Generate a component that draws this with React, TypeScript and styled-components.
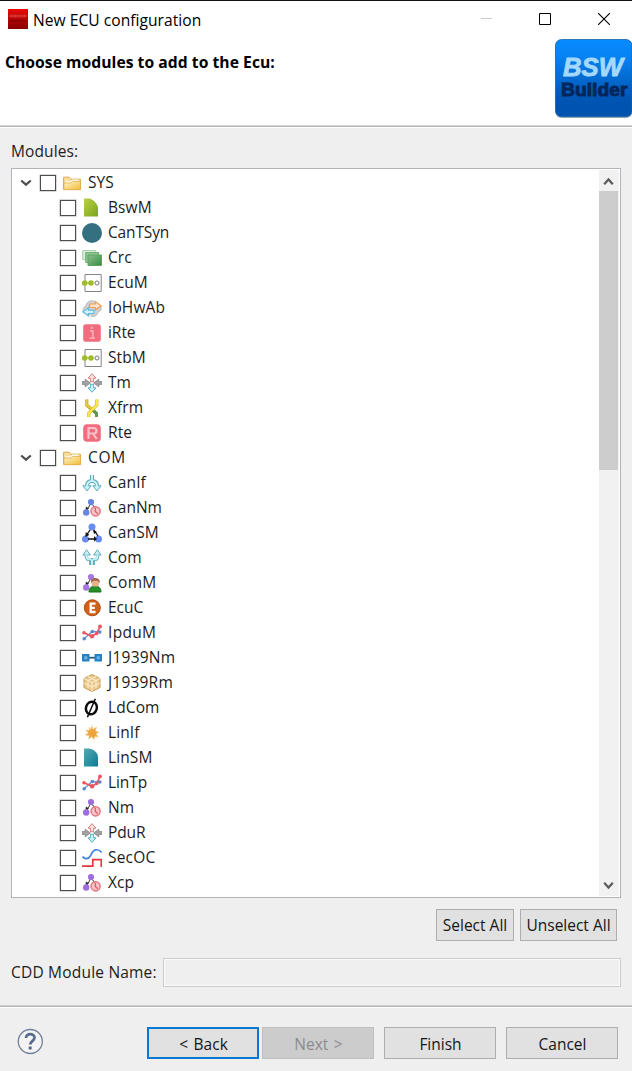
import React from "react";
import styled, { createGlobalStyle } from "styled-components";

const Global = createGlobalStyle`
  * { box-sizing: border-box; }
  body { margin: 0; background: #efefef; }
`;

const Dialog = styled.div`
  width: 632px;
  height: 1071px;
  display: flex;
  flex-direction: column;
  overflow: hidden;
  background: #efefef;
  color: #1c1c1c;
  font-family: "Open Sans", "Noto Sans", sans-serif;
  font-size: 15.5px;
  line-height: 20px;
  white-space: nowrap;
`;

const TitleBar = styled.header`
  height: 39px;
  flex: none;
  display: flex;
  align-items: center;
  padding: 0 0 2px 8px;
  background: #fff;
  border-top: 1px solid #111;
`;

const Title = styled.span`
  flex: 1;
  margin-left: 5px;
  padding-top: 2px;
  color: #000;
  font-size: 15.6px;
  letter-spacing: 0.03px;
`;

const WindowControls = styled.div`
  display: flex;
  gap: 47px;
  padding-right: 22px;
`;

const Banner = styled.section`
  height: 89px;
  flex: none;
  display: flex;
  justify-content: space-between;
  background: #fff;
  border-bottom: 1px solid #fff;
  box-shadow: inset 0 -1.5px #b4b4b4;
`;

const Heading = styled.h1`
  margin: 13px 0 0 5px;
  color: #000;
  font-size: 15.7px;
  line-height: 20px;
  font-weight: 700;
  letter-spacing: 0.03px;
`;

const Body = styled.main`
  flex: none;
  height: 880px;
  padding: 13px 11px 0;
  display: flex;
  flex-direction: column;
  border-bottom: 1px solid #fff;
  box-shadow: inset 0 -1.5px #b4b4b4;
`;

const Caption = styled.label<{ $spacing?: number }>`
  letter-spacing: ${(p) => p.$spacing ?? 0}px;
`;

const TreeFrame = styled.div`
  height: 730px;
  margin-top: 7px;
  flex: none;
  display: flex;
  justify-content: space-between;
  padding: 1px;
  background: #fff;
  border: 1px solid #b3b3b9;
`;

const Tree = styled.ul`
  margin: 0;
  padding: 0;
  list-style: none;
`;

const Row = styled.li<{ $child?: boolean }>`
  height: 25px;
  display: flex;
  align-items: flex-start;
  padding-left: ${(p) => (p.$child ? 47 : 7)}px;
`;

const Expander = styled.svg`
  width: 12px;
  height: 8px;
  margin: 9px 8px 0 0;
`;

const Check = styled.span`
  width: 16px;
  height: 16px;
  margin: 5px 1px 0 0;
  background: #fff;
  border: 1px solid #4d4d4d;
  box-shadow: 0 0 0 0.5px #b5b5b5;
`;

const Icon = styled.svg<{ $drop: number }>`
  width: 20px;
  height: 20px;
  margin: ${(p) => p.$drop}px 6px 0 5px;
`;

const RowText = styled.span<{ $spacing?: number }>`
  margin-top: 2px;
  letter-spacing: ${(p) => p.$spacing ?? 0.1}px;
`;

const ScrollTrack = styled.div`
  width: 20px;
  display: flex;
  flex-direction: column;
  background: #f1f1f1;
`;

const ScrollArrow = styled.svg`
  width: 20px;
  height: 21px;
`;

const Thumb = styled.div`
  width: 19px;
  height: 279px;
  margin-bottom: auto;
  background: #cdcdcd;
`;

const Selection = styled.div`
  display: flex;
  justify-content: flex-end;
  gap: 6px;
  margin: 11px 4px 0 0;
`;

const Button = styled.button<{ $width: number; $kind?: "default" | "disabled" }>`
  width: ${(p) => p.$width}px;
  height: 32px;
  padding: 0 0 1px;
  font: inherit;
  color: ${(p) => (p.$kind === "disabled" ? "#8b8b8b" : "#161616")};
  background: ${(p) => (p.$kind === "disabled" ? "#cccccc" : "#e1e1e1")};
  border: ${(p) => (p.$kind === "default" ? "2px solid #0878d4" : p.$kind === "disabled" ? "1px solid #bfbfbf" : "1px solid #adadad")};
`;

const NameField = styled.div`
  display: flex;
  align-items: center;
  margin-top: 17px;

  ${Caption} {
    padding-bottom: 1px;
  }
`;

const NameInput = styled.input`
  width: 458px;
  height: 29px;
  margin-left: auto;
  background: #efefef;
  border: 1px solid #cccccc;
  box-shadow: inset 0 0 0 1px #fafafa;
`;

const Footer = styled.footer`
  flex: 1;
  display: flex;
  align-items: flex-start;
  padding: 19px 14px 0 17px;
`;

const Actions = styled.div`
  margin-left: auto;
  display: flex;
  gap: 10px;

  ${Button} {
    padding: 1px 0 0 1px;
    word-spacing: 1.5px;
  }
`;

const StepPair = styled.div`
  display: flex;
  gap: 3px;
`;

const Nodes = ({ fill }: { fill: string }) => (
  <>
    <path d="M9 5 4 14M9 5l5 6" stroke="#555" strokeWidth="1.1" />
    <path d="m3.6 12 .3-3.5 3 2z" fill="#222" />
    <circle cx="9" cy="4" r="3.1" fill={fill} />
    <circle cx="4.2" cy="14.5" r="3.2" fill={fill} />
  </>
);

const Timer = ({ fill }: { fill: string }) => (
  <>
    <Nodes fill={fill} />
    <circle cx="13.6" cy="13.3" r="4.6" fill="#f6c4c7" stroke="#e77780" strokeWidth="1.5" />
    <path d="M13.3 9.8v3.7l2.5 2.3" stroke="#db5963" strokeWidth="1.2" fill="none" />
  </>
);

const Ports = () => (
  <>
    <path d="M3 1.5h16.2v17H3z" fill="#fff" stroke="#858585" />
    <path d="M0 10h11" stroke="#9caf66" />
    <circle cx="2.7" cy="10" r="2.8" fill="#9fbd2b" />
    <circle cx="9" cy="10" r="2.8" fill="#9fbd2b" />
    <circle cx="15" cy="10" r="2" fill="#fff" stroke="#777" />
  </>
);

const Router = () => (
  <>
    <path d="M0 8.6h3.2V6.2L8.4 10l-5.2 3.8v-2.4H0zM20 8.6h-3.2V6.2L11.6 10l5.2 3.8v-2.4H20z" fill="#a3a3a3" stroke="#858585" strokeWidth=".8" />
    <path d="m10 .7 4 4.5h-2.4v3.5H8.4V5.2H6z" fill="#fae0de" stroke="#d9817e" />
    <path d="m10 19.3 4-4.5h-2.4v-3.5H8.4v3.5H6z" fill="#c9f0f6" stroke="#58b0c4" />
  </>
);

const Plot = () => (
  <>
    <path d="m2 15.8 8.3-7.3L18 9" stroke="#6792d0" strokeWidth="1.3" fill="none" />
    <path d="m2 9.8 8 3.4 4.7-2.7L18 3.5" stroke="#e85561" strokeWidth="1.7" fill="none" />
    <g fill="#5c88cd"><circle cx="2.2" cy="15.8" r="1.8" /><circle cx="10.3" cy="8.5" r="1.8" /><circle cx="17.8" cy="9" r="1.8" /></g>
    <g fill="#ed5360"><circle cx="2" cy="9.8" r="1.8" /><circle cx="10" cy="13.2" r="2.2" /><circle cx="14.7" cy="10.5" r="1.8" /><circle cx="18" cy="3.5" r="1.9" /></g>
  </>
);

const glyphs: Record<string, React.ReactNode> = {
  folder: (
    <>
      <path d="M1.6 16.5V4.2h5.5l1.6 2h9.7v10.3z" fill="#f7dfa0" stroke="#dca64b" />
      <path d="M3.5 9h6l1.2-1.8h5.8" stroke="#fffdf0" strokeWidth="1.6" fill="none" />
      <path d="M2 16.7V10h7l1.5-1.6h8v8.3z" fill="url(#folderFill)" stroke="#e0aa44" strokeWidth=".7" />
    </>
  ),
  leaf: <path d="M2 .5h5.5c5 1.6 8 5.7 8.5 9.5v8.5H2z" fill="url(#leafFill)" />,
  disc: <circle cx="10" cy="10" r="10" fill="#34707f" />,
  stack: (
    <>
      <path d="M.7 2.5h13v9H.7z" fill="#dceedd" stroke="#a9cfab" />
      <path d="M3.7 4.5h13v10h-13z" fill="#92c695" stroke="#6eae72" />
      <path d="M6 7h13.5v10.5H6z" fill="url(#stackFill)" stroke="#5aa560" />
    </>
  ),
  ports: <Ports />,
  cloud: (
    <>
      <path d="M4 15C0 15 .2 9 4 8c.2-6 9-7 11-2 5 0 6 7 1 8-1 6-8 5-9 2Z" fill="#d2d2d2" stroke="#bdbdbd" />
      <path d="M7.5 6h6V3.6l5.6 4.2-5.6 4V9.5h-6z" fill="#fce2ca" stroke="#ef9d59" strokeWidth="1.2" />
      <path d="M12 12.2H6.4V9.7L.8 13.8l5.6 4v-2.3H12z" fill="#d2f1fb" stroke="#62b9dc" strokeWidth="1.2" />
    </>
  ),
  info: (
    <>
      <rect x="1.2" y="1.2" width="17.6" height="17.6" rx="2.5" fill="#f16c7e" />
      <path d="M8 8h2.8v7M7.5 15.2h5.5" stroke="#f9a7b2" strokeWidth="1.8" fill="none" />
      <circle cx="9.8" cy="4.8" r="1.2" fill="#f9a7b2" />
    </>
  ),
  router: <Router />,
  transform: (
    <>
      <path d="M4.8 1.5v5.7l9.7 8.3v3.5" stroke="#b89b22" strokeWidth="3" fill="none" />
      <path d="M4.8 1.8v5.4l5 4" stroke="#eed345" strokeWidth="1.5" fill="none" />
      <path d="m10.8 12 3.7 3.5v3.3" stroke="#5d965c" strokeWidth="3" fill="none" />
      <path d="M14.8 1.5v5.7l-8 8v3.8" stroke="#d8bc24" strokeWidth="3.2" fill="none" />
      <path d="M14.8 1.8v5.4l-8 8v3.5" stroke="#ffee4d" strokeWidth="1.7" fill="none" />
    </>
  ),
  rte: (
    <>
      <rect x="1.2" y="1.2" width="17.6" height="17.6" rx="4" fill="#f16c7e" />
      <path d="M6.5 16V5h5c4 0 4 5.5 0 5.5h-5M11 10.5l3.7 5.5" fill="none" stroke="#fbc0c7" strokeWidth="2.2" />
    </>
  ),
  split: (
    <>
      <path d="M10 2v6M10 8c-4 0-5 2-5 5M10 8c4 0 5 2 5 5" stroke="#62a9b9" strokeWidth="4" fill="none" />
      <path d="M.8 12.8h8.4L5 18zM10.8 12.8h8.4L15 18z" fill="#c7f2f8" stroke="#62a9b9" />
      <path d="M10 2v6M10 8c-4 0-5 2-5 6M10 8c4 0 5 2 5 6" stroke="#c7f2f8" strokeWidth="2" fill="none" />
    </>
  ),
  canTimer: <Timer fill="#6685df" />,
  states: (
    <>
      <g fill="#688cf1"><circle cx="10" cy="4" r="3.5" /><circle cx="3.5" cy="16" r="3.5" /><circle cx="16.5" cy="16" r="3.5" /></g>
      <path d="m8 7-4 6M12 7l4 6M6 16h7" stroke="#111" strokeWidth="1.3" />
      <path d="m3.8 9-.5 5 4-2zM11 7l1 4 3-2zM12 13l3 3-3 2.5z" fill="#111" />
    </>
  ),
  merge: (
    <>
      <path d="M8.6 17V11.5H6.2C4.6 11 4 9.5 4 6.5M11.4 17v-5.5h2.4c1.6-.5 2.2-2 2.2-5" stroke="#62a9b9" strokeWidth="3" fill="none" />
      <path d="M.8 7h7.6L4.6 1.8zM11.6 7h7.6l-3.8-5.2z" fill="#c7f2f8" stroke="#62a9b9" />
      <path d="M10 16.8v-5M9.5 11.2H6.4C4.8 10.8 4.4 9 4.4 6.5M10.5 11.2h3.1c1.6-.4 2-2.2 2-4.7" stroke="#c7f2f8" strokeWidth="2" fill="none" />
    </>
  ),
  person: (
    <>
      <Nodes fill="#a678df" />
      <path d="M7 19c0-4 2.5-6 6-6s6 2 6 6z" fill="#28902b" stroke="#17711d" />
      <circle cx="13.3" cy="9.7" r="3.9" fill="#e5b28b" />
      <path d="M9 10V8c0-4 8-4 8.7 0v2l-2-2.2H11z" fill="#9c6448" />
    </>
  ),
  config: (
    <>
      <circle cx="10.3" cy="9.8" r="8" fill="#cf6019" stroke="#b64b0b" />
      <path d="M13.5 5.6H8.7v8.4h4.8M8.2 9.8h4.6" stroke="#fff" strokeWidth="2.3" fill="none" />
    </>
  ),
  plot: <Plot />,
  link: (
    <>
      <path d="M6 9.7h9" stroke="#315d7d" strokeWidth="1.8" />
      <path d="M0 6h7.5v7.5H0zM12.5 6H20v7.5h-7.5z" fill="#2582c6" />
      <path d="M2.3 8.2h3v3h-3zM14.7 8.2h3v3h-3z" fill="#6fb7e3" />
    </>
  ),
  cube: (
    <>
      <path d="m10 1.5 8 4v9l-8 4-8-4v-9z" fill="#e9c78b" stroke="#c89b53" />
      <path d="m2 5.5 8 4 8-4M10 9.5v9M6 3.5l8 4v8M14 3.5l-8 4v8M2 10l8 4 8-4" fill="none" stroke="#fff1d1" />
    </>
  ),
  phi: (
    <>
      <ellipse cx="9.4" cy="10" rx="5.4" ry="6.4" transform="rotate(18 9.4 10)" fill="none" stroke="#0b0b0b" strokeWidth="2.5" />
      <path d="M13.3.8 5.4 19.3" stroke="#0b0b0b" strokeWidth="1.5" />
    </>
  ),
  spark: <path d="m10 3 1 3.5L14.5 4l-1.2 4L17 9l-3 1.8 2.3 3.4-3.5-1-.8 3.3-2.3-2.8-3 2.3.5-3.5-4-.5L6.5 10 3.8 7l3.7.5-.3-3.3L9 6.5z" fill="#eca33c" stroke="#f4c577" strokeWidth=".5" />,
  sector: <path d="M2 .5h5c6 1 9 5 9 9v9H2z" fill="url(#sectorFill)" />,
  timer: <Timer fill="#9f6edc" />,
  signal: (
    <>
      <path d="M.5 8.5c2.3 3 6 3 8.2-1 2.5-6.5 7-7.5 11-3" stroke="#3f83e6" strokeWidth="1.7" fill="none" />
      <path d="M0 18.2h10.8v-6.5h8.5v7.3" stroke="#e8353d" strokeWidth="1.7" fill="none" />
    </>
  ),
};

const groups: { name: string; modules: [string, string][] }[] = [
  {
    name: "SYS",
    modules: [
      ["BswM", "leaf"], ["CanTSyn", "disc"], ["Crc", "stack"], ["EcuM", "ports"], ["IoHwAb", "cloud"],
      ["iRte", "info"], ["StbM", "ports"], ["Tm", "router"], ["Xfrm", "transform"], ["Rte", "rte"],
    ],
  },
  {
    name: "COM",
    modules: [
      ["CanIf", "split"], ["CanNm", "canTimer"], ["CanSM", "states"], ["Com", "merge"], ["ComM", "person"],
      ["EcuC", "config"], ["IpduM", "plot"], ["J1939Nm", "link"], ["J1939Rm", "cube"], ["LdCom", "phi"],
      ["LinIf", "spark"], ["LinSM", "sector"], ["LinTp", "plot"], ["Nm", "timer"], ["PduR", "router"],
      ["SecOC", "signal"], ["Xcp", "timer"],
    ],
  },
];

const spacings: Record<string, number> = {
  COM: 0.7, CanTSyn: -0.15, EcuC: 0, iRte: -0.05, CanNm: 0, PduR: -0.1, LinTp: -0.1, Tm: -0.1,
  ComM: 0.3, IpduM: 0.3, J1939Nm: 0.25, J1939Rm: 0.2, SecOC: 0.2,
};

const Gradients = () => (
  <defs>
    <linearGradient id="folderFill" x2="1" y2="1"><stop stopColor="#fff6cf" /><stop offset="1" stopColor="#f0bc35" /></linearGradient>
    <linearGradient id="leafFill" x2="1" y2="1"><stop stopColor="#b9d044" /><stop offset="1" stopColor="#79a51d" /></linearGradient>
    <linearGradient id="stackFill" x2="1" y2="1"><stop stopColor="#8fc391" /><stop offset="1" stopColor="#37893d" /></linearGradient>
    <linearGradient id="sectorFill" x2="1" y2="1"><stop stopColor="#58a9b5" /><stop offset="1" stopColor="#087c91" /></linearGradient>
  </defs>
);

const ModuleIcon = ({ name }: { name: string }) => (
  <Icon $drop={name === "folder" ? 3 : 2.5} viewBox="0 0 20 20" fill="none"><Gradients />{glyphs[name]}</Icon>
);

const AppIcon = () => (
  <svg width="20" height="20" viewBox="0 0 20 20">
    <defs><linearGradient id="appFill" x2="0" y2="1"><stop stopColor="#e90a0a" /><stop offset="1" stopColor="#850000" /></linearGradient></defs>
    <path fill="url(#appFill)" d="M0 0h20v20H0z" />
    <path d="M1.5 7h17" stroke="#f07777" strokeWidth="2.5" strokeDasharray="1.3 .5" opacity=".5" />
    <path d="M2 11.7h16" stroke="#600" strokeWidth="1.7" strokeDasharray="1.5 .4" opacity=".6" />
  </svg>
);

const Logo = () => (
  <svg width="77" height="80" viewBox="0 0 77 80">
    <defs><linearGradient id="logoFill" x2="0" y2="1"><stop stopColor="#078bff" /><stop offset=".2" stopColor="#0784f5" /><stop offset=".75" stopColor="#0056b4" /><stop offset="1" stopColor="#0052ad" /></linearGradient></defs>
    <rect x=".3" y="1" width="77" height="78" rx="6" fill="#8b9299" opacity=".65" />
    <rect x=".5" y=".5" width="76.5" height="77.3" rx="6" fill="url(#logoFill)" stroke="#1764af" strokeWidth=".8" />
    <text x="8" y="37" textLength="60" lengthAdjust="spacingAndGlyphs" fill="#a4d9ff" stroke="#a4d9ff" strokeWidth=".8" fontFamily="Liberation Sans, sans-serif" fontWeight="700" fontStyle="italic" fontSize="25">BSW</text>
    <text x="6" y="57" textLength="66.5" lengthAdjust="spacingAndGlyphs" fill="#03265c" stroke="#03265c" strokeWidth=".9" fontFamily="Liberation Sans, sans-serif" fontWeight="700" fontSize="18">Builder</text>
  </svg>
);

export default function App() {
  return (
    <Dialog>
      <Global />
      <TitleBar>
        <AppIcon />
        <Title>New ECU configuration</Title>
        <WindowControls>
          <svg width="12" height="12"><path d="M1 5.5h12" stroke="#c9c9c9" /></svg>
          <svg width="12" height="12"><path d="M.5.5h11v11H.5z" fill="none" stroke="#000" /></svg>
          <svg width="12" height="12"><path d="m0 0 12 12M12 0 0 12" stroke="#000" strokeWidth="1.1" /></svg>
        </WindowControls>
      </TitleBar>
      <Banner>
        <Heading>Choose modules to add to the Ecu:</Heading>
        <Logo />
      </Banner>
      <Body>
        <Caption $spacing={0.1}>Modules:</Caption>
        <TreeFrame>
          <Tree>
            {groups.map((group) => (
              <React.Fragment key={group.name}>
                <Row>
                  <Expander viewBox="0 0 12 8"><path d="m1.2 1.5 4.8 4.2 4.8-4.2" fill="none" stroke="#505050" strokeWidth="2.2" /></Expander>
                  <Check />
                  <ModuleIcon name="folder" />
                  <RowText $spacing={spacings[group.name]}>{group.name}</RowText>
                </Row>
                {group.modules.map(([name, icon]) => (
                  <Row key={name} $child>
                    <Check />
                    <ModuleIcon name={icon} />
                    <RowText $spacing={spacings[name]}>{name}</RowText>
                  </Row>
                ))}
              </React.Fragment>
            ))}
          </Tree>
          <ScrollTrack>
            <ScrollArrow viewBox="0 0 20 21"><path d="m5.2 14.2 4.3-4.7 4.3 4.7" fill="none" stroke="#5b5b5b" strokeWidth="2.2" /></ScrollArrow>
            <Thumb />
            <ScrollArrow viewBox="0 0 20 21"><path d="m5.2 7.8 4.3 4.7 4.3-4.7" fill="none" stroke="#5b5b5b" strokeWidth="2.2" /></ScrollArrow>
          </ScrollTrack>
        </TreeFrame>
        <Selection>
          <Button $width={78}>Select All</Button>
          <Button $width={97}>Unselect All</Button>
        </Selection>
        <NameField>
          <Caption htmlFor="cdd-name" $spacing={0.2}>CDD Module Name:</Caption>
          <NameInput id="cdd-name" disabled />
        </NameField>
      </Body>
      <Footer>
        <svg width="26" height="28" viewBox="0 0 26 28">
          <circle cx="13.3" cy="14.5" r="12" fill="#f3f3f3" stroke="#71809a" strokeWidth="1.3" />
          <path d="M9 11c0-5.2 8.5-5 8.5-.4 0 3.6-4.3 3.5-4.3 7" fill="none" stroke="#596b8c" strokeWidth="2.7" />
          <circle cx="13.2" cy="21" r="1.7" fill="#596b8c" />
        </svg>
        <Actions>
          <StepPair>
            <Button $width={112} $kind="default">&lt; Back</Button>
            <Button $width={112} $kind="disabled" disabled>Next &gt;</Button>
          </StepPair>
          <Button $width={112}>Finish</Button>
          <Button $width={112}>Cancel</Button>
        </Actions>
      </Footer>
    </Dialog>
  );
}
